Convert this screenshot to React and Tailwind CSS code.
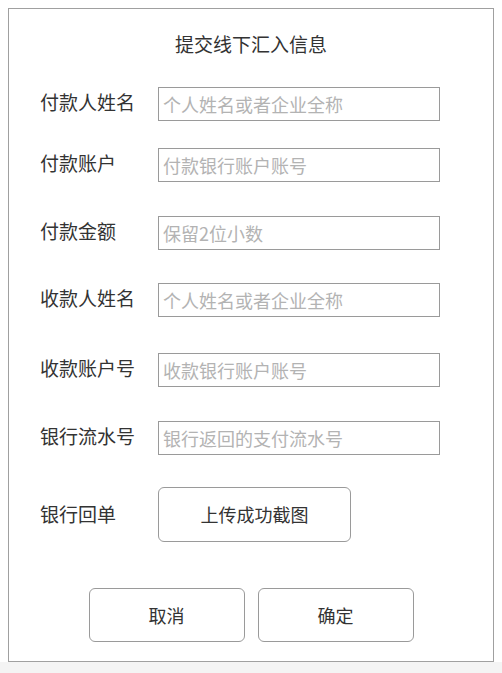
import React from 'react';

const fields = [
  { label: '付款人姓名', placeholder: '个人姓名或者企业全称', mt: 'mt-[31px]' },
  { label: '付款账户', placeholder: '付款银行账户账号', mt: 'mt-[27px]' },
  { label: '付款金额', placeholder: '保留2位小数', mt: 'mt-[34px]' },
  { label: '收款人姓名', placeholder: '个人姓名或者企业全称', mt: 'mt-[33px]' },
  { label: '收款账户号', placeholder: '收款银行账户账号', mt: 'mt-[36px]' },
  { label: '银行流水号', placeholder: '银行返回的支付流水号', mt: 'mt-[34px]' },
];

const Field = ({ label, placeholder, mt }) => (
  <div className={`flex items-center ${mt}`}>
    <div className="w-[118px] pb-[4px] text-[19px] leading-[24px] text-[#333]">{label}</div>
    <input
      type="text"
      placeholder={placeholder}
      className="w-[282px] h-[34px] border border-[#9a9a9a] bg-white pl-[4px] text-[18px] text-[#333] placeholder:text-[#b3b3b3] outline-none"
    />
  </div>
);

export default function App() {
  return (
    <div
      className="h-[673px] w-[502px] flex flex-col bg-white"
      style={{ fontFamily: '"Noto Sans CJK SC", "Noto Sans", sans-serif' }}
    >
      <div className="pt-[8px] px-[8px] bg-white">
        <div className="h-[654px] border border-[#a0a0a0] bg-white">
          <div className="mt-[23px] text-center text-[19px] leading-[24px] text-[#333]">
            提交线下汇入信息
          </div>
          <div className="pl-[31px]">
            {fields.map((f) => (
              <Field key={f.label} {...f} />
            ))}
            <div className="flex items-center mt-[32px]">
              <div className="w-[118px] pb-[2px] text-[19px] leading-[24px] text-[#333]">银行回单</div>
              <button className="w-[193px] h-[55px] rounded-[6px] border border-[#9a9a9a] bg-white text-[18px] text-[#333]">
                上传成功截图
              </button>
            </div>
          </div>
          <div className="flex justify-center gap-[13px] mt-[46px]">
            <button className="w-[156px] h-[54px] rounded-[6px] border border-[#9a9a9a] bg-white text-[18px] text-[#333]">
              取消
            </button>
            <button className="w-[156px] h-[54px] rounded-[6px] border border-[#9a9a9a] bg-white text-[18px] text-[#333]">
              确定
            </button>
          </div>
        </div>
      </div>
      <div className="flex-1 bg-[#f4f4f4]" />
    </div>
  );
}
